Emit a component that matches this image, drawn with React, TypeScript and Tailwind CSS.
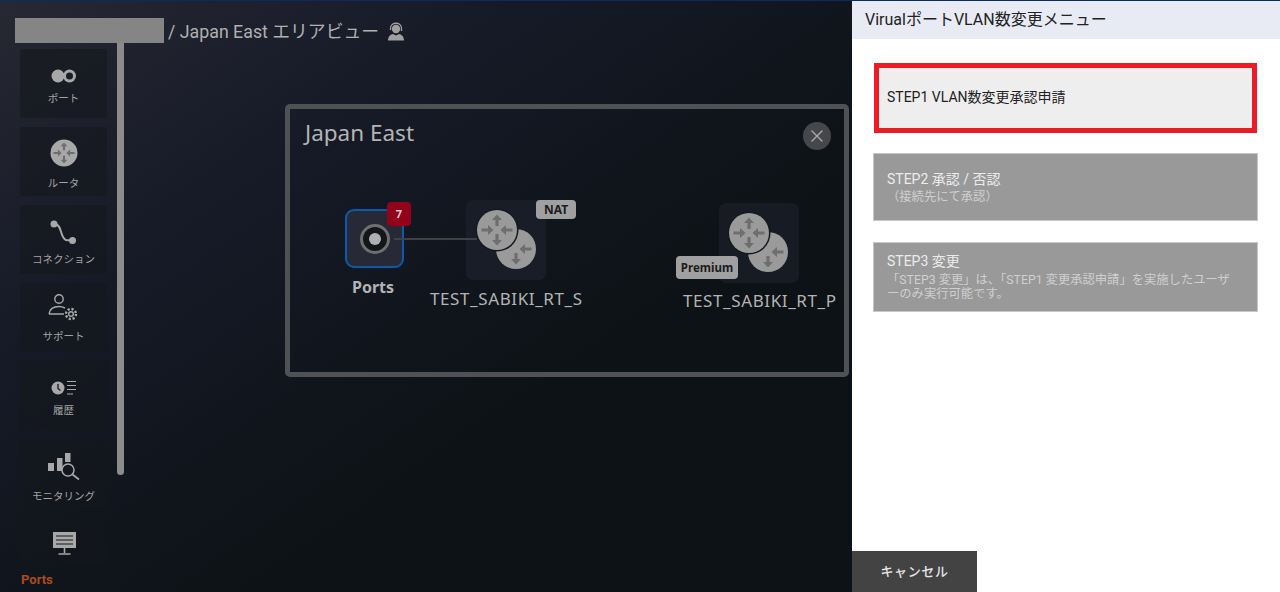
import { X } from 'lucide-react'

const FONT = "font-['Roboto','Noto_Sans_CJK_JP',sans-serif]"
const MAP_FONT = "font-['Noto_Sans','Noto_Sans_CJK_JP',sans-serif]"

// one arrow pointing at the centre of the router, drawn for the "up" side and rotated for the rest
const ARROW = 'M-5 -10 L0 -15.5 L5 -10 L1.6 -10 L1.6 -4 L-1.6 -4 L-1.6 -10 Z'
const ARROW_IN = 'M-5 -9 L0 -3.5 L5 -9 L1.6 -9 L1.6 -15.5 L-1.6 -15.5 L-1.6 -9 Z'

function Arrows({ cx, cy, skip = [] }: { cx: number; cy: number; skip?: string[] }) {
  return (
    <g fill="#6e6e6e" transform={`translate(${cx} ${cy})`}>
      {!skip.includes('up') && <path d={ARROW} />}
      {!skip.includes('down') && <path d={ARROW} transform="rotate(180)" />}
      {!skip.includes('left') && <path d={ARROW_IN} transform="rotate(-90)" />}
      {!skip.includes('right') && <path d={ARROW_IN} transform="rotate(90)" />}
    </g>
  )
}

function DoubleRouter() {
  return (
    <svg width="62" height="62" viewBox="0 0 62 62">
      <circle cx="41" cy="41" r="20" fill="#9a9a9a" />
      <Arrows cx={41} cy={41} skip={['left', 'up']} />
      <circle cx="22" cy="22" r="21.5" fill="#15181f" />
      <circle cx="22" cy="22" r="20" fill="#9a9a9a" />
      <Arrows cx={22} cy={22} />
    </svg>
  )
}

function PortIcon() {
  return (
    <svg width="26" height="14" viewBox="0 0 26 14">
      <circle cx="7" cy="7" r="6.5" fill="#a8a8a8" />
      <circle cx="18.5" cy="7" r="6.5" fill="#a8a8a8" />
      <circle cx="18.5" cy="7" r="3.5" fill="#1a1c26" />
    </svg>
  )
}

function RouterIcon() {
  return (
    <svg width="28" height="28" viewBox="0 0 28 28">
      <circle cx="14" cy="14" r="13.5" fill="#a8a8a8" />
      <g transform="translate(14 14) scale(0.68) translate(-14 -14)">
        <Arrows cx={14} cy={14} />
      </g>
    </svg>
  )
}

function ConnectionIcon() {
  return (
    <svg width="27" height="25" viewBox="0 0 27 25">
      <circle cx="4" cy="4" r="3.5" fill="#a8a8a8" />
      <circle cx="22.5" cy="20.5" r="3.5" fill="#a8a8a8" />
      <path d="M5 4 C12 4 10 18 16 20 L22 20.5" fill="none" stroke="#a8a8a8" strokeWidth="2" />
    </svg>
  )
}

function SupportIcon() {
  return (
    <svg width="31" height="28" viewBox="0 0 31 28" fill="none" stroke="#a8a8a8" strokeWidth="1.4">
      <circle cx="11" cy="6" r="4.2" />
      <path d="M1 21 C2 14 8 13.5 11 13.5 C13 13.5 15 14 17 15 M1 21 H16" />
      <circle cx="23" cy="21" r="2.3" />
      <circle cx="23" cy="21" r="5" strokeWidth="2.4" strokeDasharray="2.2 1.7" />
    </svg>
  )
}

function HistoryIcon() {
  return (
    <svg width="26" height="16" viewBox="0 0 26 16">
      <circle cx="7" cy="8" r="6.5" fill="#a8a8a8" />
      <path d="M7 4 V8.5 L9.5 10.5" fill="none" stroke="#1a1d27" strokeWidth="1.4" />
      <path d="M16 1.5 H25 M16 5.5 H25 M16 9.5 H25 M16 14 H22" stroke="#a8a8a8" strokeWidth="1.2" />
    </svg>
  )
}

function MonitoringIcon() {
  return (
    <svg width="33" height="28" viewBox="0 0 33 28">
      <rect x="1" y="11" width="6" height="8" fill="#a8a8a8" />
      <rect x="10" y="6" width="5.5" height="13" fill="#a8a8a8" />
      <rect x="18" y="1" width="5.5" height="9" fill="#a8a8a8" />
      <circle cx="21" cy="18" r="6" fill="#12161e" stroke="#a8a8a8" strokeWidth="1.5" />
      <path d="M25.5 22.5 L32 27.5" stroke="#a8a8a8" strokeWidth="1.8" />
    </svg>
  )
}

function ScreenIcon() {
  return (
    <svg width="24" height="24" viewBox="0 0 24 24">
      <path d="M1 1 H24 V17 H1 Z" fill="#a8a8a8" />
      <path d="M4 5 H21 M4 9 H21 M4 13 H21" stroke="#12161c" strokeWidth="1.2" />
      <path d="M12.5 17 V22 M6.5 23 H18.5" stroke="#a8a8a8" strokeWidth="1.6" />
    </svg>
  )
}

function HeadsetIcon() {
  return (
    <svg width="18" height="19" viewBox="0 0 18 19">
      <circle cx="9" cy="7" r="4.2" fill="#a0a0a0" />
      <path d="M3.5 8 V6.5 C3.5 -0.5 14.5 -0.5 14.5 6.5 V9" fill="none" stroke="#a0a0a0" strokeWidth="1.3" />
      <path d="M1 18.5 C1 14 4 12.5 6 12 L9 13.5 L12 12 C14 12.5 17 14 17 18.5 Z" fill="#a0a0a0" />
    </svg>
  )
}

const NAV = [
  { label: 'ポート', icon: <PortIcon />, boxClass: 'h-[69px] pt-[20px]', labelClass: 'mt-[9px]' },
  { label: 'ルータ', icon: <RouterIcon />, boxClass: 'h-[69px] pt-[12px]', labelClass: 'mt-[10px]' },
  { label: 'コネクション', icon: <ConnectionIcon />, boxClass: 'h-[69px] pt-[15px]', labelClass: 'mt-[8px]' },
  { label: 'サポート', icon: <SupportIcon />, boxClass: 'h-[69px] pt-[10px]', labelClass: 'mt-[9px]' },
  { label: '履歴', icon: <HistoryIcon />, boxClass: 'h-[69px] pt-[19px]', labelClass: 'mt-[8px]' },
  { label: 'モニタリング', icon: <MonitoringIcon />, boxClass: 'h-[69px] pt-[13px]', labelClass: 'mt-[10px]' },
]

function Sidebar() {
  return (
    <div className="flex gap-[10px] pl-5 h-[549px] overflow-hidden">
      <div className="flex flex-col w-[87px] shrink-0 pt-[6px]">
        {NAV.map((item) => (
          <div
            key={item.label}
            className={`flex flex-col items-center rounded-[3px] bg-[#14171c]/60 mb-[9px] shrink-0 ${item.boxClass}`}
          >
            {item.icon}
            <span className={`text-[10.5px] leading-[14px] text-[#a3a3a3] ${item.labelClass}`}>{item.label}</span>
          </div>
        ))}
        <div className="flex flex-col items-center rounded-[3px] bg-[#14171c]/60 h-[48px] pt-[14px] shrink-0">
          <ScreenIcon />
        </div>
        <span className="block mt-[8px] ml-[1px] text-[13px] leading-[14px] font-bold text-[#ad4a17]">Ports</span>
      </div>
      <div className="w-[7px] h-[432px] shrink-0 rounded-b-full bg-[#8c8c8c]" />
    </div>
  )
}

function AreaMap() {
  return (
    <div className={`relative mt-[61px] ml-[161px] h-[273px] w-[564px] shrink-0 rounded-[5px] border-[5px] border-[#4f5155] text-[#b4b4b4] ${MAP_FONT}`}>
      <span className="absolute left-[15px] top-[9px] text-[22.5px] leading-[30px]">Japan East</span>
      <span className="absolute left-[513px] top-[13px] flex h-[28px] w-[28px] items-center justify-center rounded-full bg-[#45474a]">
        <X size={20} strokeWidth={1.6} className="text-[#a8a8a8]" />
      </span>

      {/* Router nodes */}
      <div className="absolute left-[176px] top-[91px] h-[80px] w-[80px] rounded-[7px] bg-[#1c1f2a]/80 pl-[9px] pt-[8px]">
        <DoubleRouter />
      </div>
      <span className="absolute left-[246px] top-[91px] flex h-[19px] w-[40px] items-center justify-center rounded-[4px] bg-[#a0a0a0] text-[12px] font-bold text-[#1c1c1c]">
        NAT
      </span>
      <span className="absolute left-[140px] top-[180px] text-[17px] tracking-[0.6px] leading-[20px] whitespace-nowrap">TEST_SABIKI_RT_S</span>

      <div className="absolute left-[429px] top-[94px] h-[80px] w-[80px] rounded-[7px] bg-[#1c1f2a]/70 pl-[8px] pt-[8px]">
        <DoubleRouter />
      </div>
      <span className="absolute left-[386px] top-[147px] flex h-[23px] w-[62px] items-center justify-center rounded-[4px] bg-[#a0a0a0] text-[11.5px] font-bold text-[#1c1c1c]">
        Premium
      </span>
      <span className="absolute left-[393px] top-[182px] text-[17px] tracking-[0.6px] leading-[20px] whitespace-nowrap">TEST_SABIKI_RT_P</span>

      {/* Ports node */}
      <div className="absolute left-[103px] top-[129px] h-[2px] w-[84px] bg-[#3f4145]" />
      <div className="absolute left-[55px] top-[100px] h-[59px] w-[59px] rounded-[9px] border-2 border-[#0a5bab] bg-[#272a36] flex items-center justify-center">
        <span className="h-[30px] w-[30px] rounded-full border-[3px] border-[#6f6f6f] bg-[#13161b] flex items-center justify-center">
          <span className="h-[12px] w-[12px] rounded-full bg-[#b0b0b0]" />
        </span>
      </div>
      <div className="absolute left-[104px] top-[129px] h-[2px] w-[10px] bg-[#3f4145]" />
      <span className="absolute left-[97px] top-[93px] flex h-[24px] w-[24px] items-center justify-center rounded-[4px] bg-[#93021a] font-bold text-[11px] text-[#cfcfcf]">
        7
      </span>
      <span className="absolute left-[62px] top-[168px] text-[16px] leading-[20px] font-bold">Ports</span>
    </div>
  )
}

export default function App() {
  return (
    <div className={`flex h-[592px] w-[1280px] overflow-hidden border-t border-[#0b2a5e] ${FONT}`}>
      <div className="w-[852px] shrink-0 bg-linear-to-br from-[#262832] from-0% via-[#161a27] via-30% to-[#0d1216] to-65%">
        <div className="flex items-center h-[25px] mt-[17px] pl-[15px]">
          <div className="h-[25px] w-[149px] shrink-0 bg-[#858585]" />
          <span className="ml-[4px] pt-[2px] text-[17.8px] leading-[25px] text-[#b0b0b0] whitespace-nowrap">/ Japan East エリアビュー</span>
          <span className="ml-[8px] pt-[2px]">
            <HeadsetIcon />
          </span>
        </div>
        <div className="flex">
          <Sidebar />
          <AreaMap />
        </div>
      </div>

      <div className="flex flex-1 flex-col bg-white">
        <div className="flex h-[38px] items-center bg-[#e8ebf4] pl-[13px] text-[16px] text-[#222]">
          VirualポートVLAN数変更メニュー
        </div>
        <div className="flex flex-1 flex-col pl-[21px] pr-[22px] pt-[24px]">
          <div className="flex h-[70px] items-center border-[5px] border-[#ed1c24] bg-[#eeeeee] pl-[8px] mx-[1px] text-[14px] text-[#222] pb-[2px]">
            STEP1 VLAN数変更承認申請
          </div>
          <div className="mt-[20px] h-[68px] border border-[#c8c8c8] bg-[#999999] pl-[13px] pt-[16px] text-[#ececec]">
            <p className="text-[14px] leading-[18px]">STEP2 承認 / 否認</p>
            <p className="text-[12.3px] leading-[19px] text-[#cfcfcf]">（接続先にて承認）</p>
          </div>
          <div className="mt-[21px] h-[70px] border border-[#c8c8c8] bg-[#999999] pl-[13px] pr-[20px] pt-[9px] text-[#ececec]">
            <p className="text-[14px] leading-[18px]">STEP3 変更</p>
            <p className="mt-[3px] text-[12.3px] leading-[14px] text-[#cfcfcf]">「STEP3 変更」は、「STEP1 変更承認申請」を実施したユーザーのみ実行可能です。</p>
          </div>
          <div className="flex-1" />
          <button className="-ml-[21px] h-[41px] w-[125px] bg-[#434343] pt-[1px] text-[13px] font-medium tracking-[0.6px] text-[#e6e6e6]">
            キャンセル
          </button>
        </div>
      </div>
    </div>
  )
}
